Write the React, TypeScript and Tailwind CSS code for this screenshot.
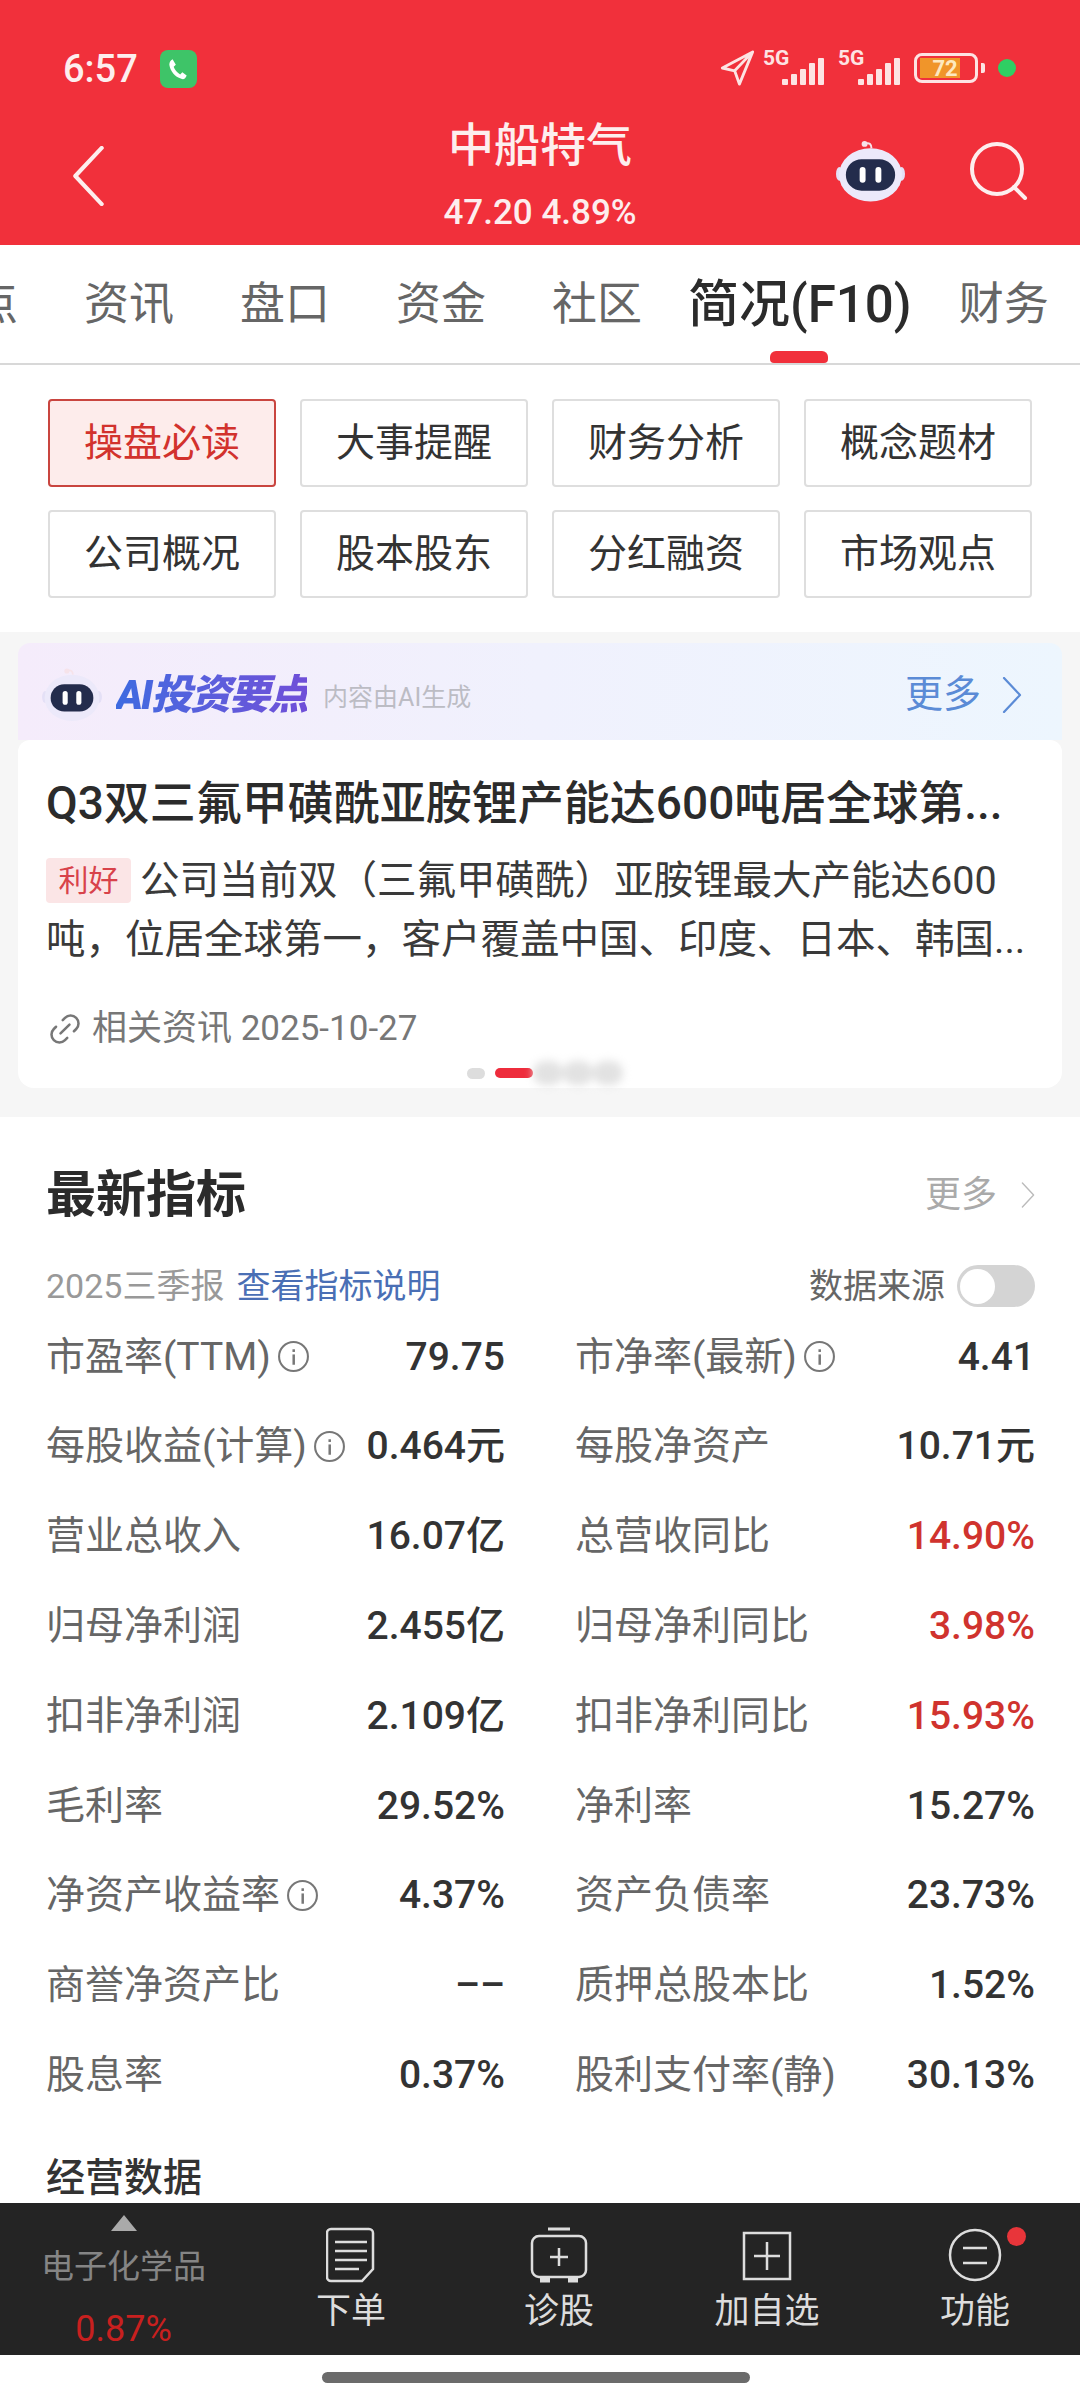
import { Link2 } from "lucide-react";

const buttons = ["操盘必读", "大事提醒", "财务分析", "概念题材", "公司概况", "股本股东", "分红融资", "市场观点"];

const rows = [
  { l: "市盈率(TTM)", info: true, v: "79.75", r: "市净率(最新)", rInfo: true, rv: "4.41" },
  { l: "每股收益(计算)", info: true, v: "0.464元", r: "每股净资产", rv: "10.71元" },
  { l: "营业总收入", v: "16.07亿", r: "总营收同比", rv: "14.90%", red: true },
  { l: "归母净利润", v: "2.455亿", r: "归母净利同比", rv: "3.98%", red: true },
  { l: "扣非净利润", v: "2.109亿", r: "扣非净利同比", rv: "15.93%", red: true },
  { l: "毛利率", v: "29.52%", r: "净利率", rv: "15.27%" },
  { l: "净资产收益率", info: true, v: "4.37%", r: "资产负债率", rv: "23.73%" },
  { l: "商誉净资产比", v: "––", r: "质押总股本比", rv: "1.52%" },
  { l: "股息率", v: "0.37%", r: "股利支付率(静)", rv: "30.13%" },
];

const Robot = ({ className }: { className: string }) => (
  <svg viewBox="0 0 70 62" className={className}>
    <path d="M36 8c0-4-2-6-6-5" fill="none" stroke="#f6e3ea" strokeWidth="2" />
    <circle cx="29" cy="3.5" r="3" fill="#f6e3ea" />
    <ellipse cx="3.5" cy="34" rx="3.5" ry="7" fill="#e4e0f6" />
    <ellipse cx="66.5" cy="34" rx="3.5" ry="7" fill="#e4e0f6" />
    <ellipse cx="35" cy="35" rx="32" ry="27" fill="#ece9fa" />
    <rect x="10" y="19" width="50" height="32" rx="16" fill="#232c4c" />
    <rect x="24" y="27" width="6" height="16" rx="3" fill="#fff" />
    <rect x="40" y="27" width="6" height="16" rx="3" fill="#fff" />
  </svg>
);

// thin open chevron used for back and "more" arrows
const Chevron = ({ className, color, width, left }: { className: string; color: string; width: number; left?: boolean }) => (
  <svg viewBox="0 0 20 36" className={className} fill="none" stroke={color} strokeWidth={width} strokeLinecap="round" strokeLinejoin="round">
    <path d={left ? "M18 1L2 18l16 17" : "M2 1l16 17L2 35"} />
  </svg>
);

const Info = () => (
  <svg viewBox="0 0 32 32" className="ml-[6px] h-[33px] w-[33px] shrink-0" fill="none">
    <circle cx="16" cy="16" r="14" stroke="#777" strokeWidth="2" />
    <rect x="15" y="14" width="2.4" height="10" fill="#777" />
    <rect x="15" y="9" width="2.4" height="2.6" fill="#777" />
  </svg>
);

const Signal = () => (
  <div className="flex items-end gap-[3px]">
    <div className="h-[6px] w-[6px] rounded-[1px] bg-[#fde3e3]" />
    <div className="h-[11px] w-[6px] rounded-[1px] bg-[#fde3e3]" />
    <div className="h-[16px] w-[6px] rounded-[1px] bg-[#fde3e3]" />
    <div className="h-[22px] w-[6px] rounded-[1px] bg-[#fde3e3]" />
    <div className="h-[27px] w-[6px] rounded-[1px] bg-[#fde3e3]" />
  </div>
);

const App = () => {
  return (
    <div className="flex h-[2400px] w-[1080px] flex-col overflow-hidden bg-white font-['Roboto','Noto_Sans_CJK_SC',sans-serif]">
      {/* Header */}
      <header className="h-[245px] shrink-0 bg-[#f1303b] text-[#fdeeee]">
        <div className="flex h-[116px] items-start justify-between pl-[63px] pr-[64px] pt-[50px]">
          <div className="flex items-center gap-[22px]">
            <span className="text-[38px] leading-[38px] [font-weight:500]">6:57</span>
            <div className="flex h-[38px] w-[37px] items-center justify-center rounded-[8px] bg-[#3ec468]">
              <svg viewBox="0 0 24 24" className="h-[26px] w-[26px]" fill="#fff">
                <path d="M7 3l3 5-2 2c1 3 3 5 6 7l2-2 4 3c-1 3-3 4-5 3C9 19 5 14 4 8c0-2 1-4 3-5z" />
              </svg>
            </div>
          </div>
          <div className="flex items-center">
            <svg viewBox="0 0 36 38" className="h-[36px] w-[35px]" fill="none">
              <path d="M34 2L2 19l13 3 5 14L34 2zM15 22L34 2" stroke="#fde3e3" strokeWidth="3" strokeLinejoin="round" />
            </svg>
            <div className="relative ml-[8px] h-[33px] w-[61px]">
              <span className="absolute left-0 top-[-7px] text-[21px] font-bold leading-[26px] text-[#fde3e3]">5G</span>
              <div className="absolute bottom-0 right-0">
                <Signal />
              </div>
            </div>
            <div className="relative ml-[14px] h-[33px] w-[62px]">
              <span className="absolute left-0 top-[-7px] text-[21px] font-bold leading-[26px] text-[#fde3e3]">5G</span>
              <div className="absolute bottom-0 right-0">
                <Signal />
              </div>
            </div>
            <div className="ml-[14px] flex h-[30px] w-[64px] items-center rounded-[8px] border-[3px] border-[#fde3e3] px-[3px]">
              <div className="flex h-[20px] w-[40px] items-center justify-center bg-[#f0952a] pl-[10px] text-[22px] font-bold text-[#fde9c0]">
                72
              </div>
            </div>
            <div className="ml-[3px] h-[10px] w-[4px] rounded-r-[2px] bg-[#fde3e3]" />
            <div className="ml-[13px] h-[18px] w-[18px] rounded-full bg-[#2fcf63]" />
          </div>
        </div>
        <div className="relative flex items-start justify-between pl-[72px] pr-[52px]">
          <Chevron className="mt-[30px] h-[60px] w-[33px]" color="#fdeeee" width={2.5} left />
          <div className="absolute left-0 right-0 top-0 flex -translate-y-[1px] flex-col items-center">
            <span className="text-[46px] font-medium leading-[60px]">中船特气</span>
            <span className="mt-[18px] text-[35px] font-medium leading-[40px]">47.20 4.89%</span>
          </div>
          <div className="flex items-center gap-[65px] pt-[24px]">
            <Robot className="h-[62px] w-[69px]" />
            <svg viewBox="0 0 58 58" className="h-[58px] w-[58px]" fill="none" stroke="#fdeeee" strokeWidth="4">
              <circle cx="27" cy="27" r="25" />
              <path d="M44 45l11 11" strokeLinecap="round" />
            </svg>
          </div>
        </div>
      </header>

      {/* Tabs */}
      <nav className="flex h-[120px] shrink-0 items-center gap-[66px] overflow-hidden border-b-2 border-[#d8d8d8] pt-[2px] text-[45px] text-[#666] [&>*]:shrink-0">
        <span className="-ml-[27px]">点</span>
        <span>资讯</span>
        <span>盘口</span>
        <span>资金</span>
        <span>社区</span>
        <span className="relative -ml-[20px] -mr-[19px] text-[51px] font-medium leading-[60px] text-[#2b2b2b]">
          简况(F10)
          <span className="absolute bottom-[-28px] left-[82px] h-[12px] w-[58px] rounded-t-[6px] rounded-b-[4px] bg-[#f1303b]" />
        </span>
        <span>财务</span>
      </nav>

      {/* Grid buttons */}
      <div className="grid h-[267px] shrink-0 grid-cols-4 content-start gap-x-[24px] gap-y-[23px] pl-[48px] pr-[48px] pt-[34px]">
        {buttons.map((b, i) => (
          <div
            key={b}
            className={
              i === 0
                ? "flex h-[88px] items-center justify-center rounded-[4px] border-2 border-[#c9453f] bg-[#fdeceb] text-[39px] text-[#d2322d]"
                : "flex h-[88px] items-center justify-center rounded-[4px] border-2 border-[#dedede] bg-white text-[39px] text-[#333]"
            }
          >
            {b}
          </div>
        ))}
      </div>

      {/* AI section */}
      <section className="h-[485px] shrink-0 bg-[#f6f6f6] px-[18px] pt-[11px]">
        <div className="flex h-[97px] items-center rounded-t-[12px] bg-gradient-to-r from-[#f5ecfb] via-[#f0f1fd] to-[#edf6fe] pl-[24px] pr-[40px] pt-[6px]">
          <Robot className="h-[53px] w-[60px]" />
          <span className="ml-[14px] bg-gradient-to-r from-[#3d6be0] to-[#6f4fd8] bg-clip-text text-[41px] font-black italic leading-[52px] tracking-[-2px] text-transparent">
            AI投资要点
          </span>
          <span className="ml-[16px] mt-[6px] text-[25px] text-[#bcbcc4]">内容由AI生成</span>
          <span className="ml-auto text-[38px] text-[#5b8bd6]">更多</span>
          <Chevron className="ml-[21px] h-[36px] w-[20px]" color="#5b8bd6" width={2.2} />
        </div>
        <div className="h-[348px] rounded-b-[16px] rounded-t-[12px] bg-white pl-[28px] pr-[18px]">
          <div className="whitespace-nowrap pt-[32px] text-[46px] font-medium leading-[62px] text-[#2b2b2b]">
            Q3双三氟甲磺酰亚胺锂产能达600吨居全球第...
          </div>
          <div className="mt-[17px] flex items-center whitespace-nowrap text-[39.5px] leading-[59px] text-[#3a3a3a]">
            <span className="mr-[9px] flex h-[45px] w-[85px] items-center justify-center rounded-[4px] bg-[#fbe5e6] text-[30px] text-[#d8424a]">
              利好
            </span>
            <span>公司当前双（三氟甲磺酰）亚胺锂最大产能达600</span>
          </div>
          <div className="whitespace-nowrap text-[39.5px] leading-[59px] text-[#3a3a3a]">
            吨，位居全球第一，客户覆盖中国、印度、日本、韩国...
          </div>
          <div className="mt-[40px] flex items-center text-[35px] leading-[40px] text-[#777]">
            <Link2 className="h-[38px] w-[38px] -rotate-45" strokeWidth={1.6} color="#777" />
            <span className="ml-[8px]">相关资讯 2025-10-27</span>
          </div>
          <div className="mt-[12px] flex items-center pl-[421px]">
            <div className="h-[11px] w-[18px] rounded-full bg-[#dddddd]" />
            <div className="ml-[10px] h-[10px] w-[38px] rounded-full bg-[#ee2c3c]" />
            <div className="flex blur-[4px]">
              <div className="h-[24px] w-[30px] rounded-full bg-[#e2e2e2]" />
              <div className="h-[24px] w-[30px] rounded-full bg-[#e2e2e2]" />
              <div className="h-[24px] w-[30px] rounded-full bg-[#e2e2e2]" />
            </div>
          </div>
        </div>
      </section>

      {/* Indicators */}
      <main className="min-h-0 flex-1 overflow-hidden pl-[46px] pr-[45px] pt-[48px]">
        <div className="flex h-[60px] items-center justify-between">
          <span className="text-[50px] font-bold text-[#2b2b2b]">最新指标</span>
          <div className="flex items-center text-[36px] text-[#aaa]">
            更多
            <Chevron className="ml-[24px] h-[34px] w-[14px]" color="#bbb" width={2} />
          </div>
        </div>
        <div className="mt-[40px] flex h-[42px] items-center text-[34px]">
          <span className="text-[#999]">2025三季报</span>
          <span className="ml-[12px] text-[#4a6fb5]">查看指标说明</span>
          <span className="ml-auto text-[#666]">数据来源</span>
          <div className="ml-[12px] flex h-[42px] w-[78px] items-center rounded-full bg-[#d4d4d4] pl-[3px]">
            <div className="h-[35px] w-[35px] rounded-full bg-white" />
          </div>
        </div>
        <div className="mt-[10px]">
          {rows.map((row) => (
            <div key={row.l} className="flex h-[89.8px] items-center pb-[10px] text-[39px]">
              <div className="flex w-[459px] items-center">
                <span className="text-[#666]">{row.l}</span>
                {row.info && <Info />}
                <span className="ml-auto font-medium text-[#333]">{row.v}</span>
              </div>
              <div className="ml-[70px] flex flex-1 items-center">
                <span className="text-[#666]">{row.r}</span>
                {row.rInfo && <Info />}
                <span className={row.red ? "ml-auto font-medium text-[#d0332e]" : "ml-auto font-medium text-[#333]"}>
                  {row.rv}
                </span>
              </div>
            </div>
          ))}
        </div>
        <div className="mt-[28px] text-[39px] font-medium leading-[50px] text-[#333]">经营数据</div>
      </main>

      {/* Bottom bar */}
      <footer className="flex h-[152px] shrink-0 bg-[#242424]">
        <div className="flex w-[247px] flex-col items-center pt-[12px]">
          <div className="h-0 w-0 border-x-[13px] border-b-[16px] border-x-transparent border-b-[#aaa]" />
          <span className="mt-[16px] text-[33px] leading-[40px] text-[#858585]">电子化学品</span>
          <span className="mt-[22px] text-[36px] leading-[40px] text-[#c8201f]">0.87%</span>
        </div>
        <div className="flex w-[208px] flex-col items-center pt-[24px]">
          <svg viewBox="0 0 50 56" className="h-[56px] w-[50px]" fill="none" stroke="#ddd" strokeWidth="2.5">
            <path d="M5 2h38a4 4 0 0 1 4 4v36l-11 12H5a4 4 0 0 1-4-4V6a4 4 0 0 1 4-4z" />
            <path d="M9 15h32M9 24h32M9 33h32M9 42h24" />
          </svg>
          <span className="mt-[7px] text-[35px] leading-[44px] text-[#ddd]">下单</span>
        </div>
        <div className="flex w-[208px] flex-col items-center pt-[24px]">
          <svg viewBox="0 0 58 56" className="h-[56px] w-[58px]" fill="none" stroke="#ddd" strokeWidth="2.5">
            <path d="M18 2h22" strokeWidth="3" />
            <rect x="2" y="9" width="54" height="41" rx="7" />
            <path d="M29 21v18M20 30h18" />
            <path d="M10 53h10M38 53h10" strokeWidth="5" />
          </svg>
          <span className="mt-[7px] text-[35px] leading-[44px] text-[#ddd]">诊股</span>
        </div>
        <div className="flex w-[208px] flex-col items-center pt-[24px]">
          <svg viewBox="0 0 50 56" className="h-[56px] w-[50px]" fill="none" stroke="#ddd" strokeWidth="2.5">
            <rect x="2" y="6" width="46" height="46" />
            <path d="M25 15v28M12 29h26" />
          </svg>
          <span className="mt-[7px] text-[35px] leading-[44px] text-[#ddd]">加自选</span>
        </div>
        <div className="relative flex w-[208px] flex-col items-center pt-[24px]">
          <svg viewBox="0 0 54 56" className="h-[56px] w-[54px]" fill="none" stroke="#ddd" strokeWidth="2.5">
            <circle cx="27" cy="28" r="25" />
            <path d="M15 21h24M15 36h24" />
          </svg>
          <span className="mt-[7px] text-[35px] leading-[44px] text-[#ddd]">功能</span>
          <div className="absolute left-[136px] top-[24px] h-[19px] w-[19px] rounded-full bg-[#e8353a]" />
        </div>
      </footer>

      {/* Gesture bar */}
      <div className="flex h-[45px] shrink-0 justify-center pt-[17px]">
        <div className="h-[11px] w-[428px] -translate-x-[4px] rounded-full bg-[#6b6b6b]" />
      </div>
    </div>
  );
};

export default App;
